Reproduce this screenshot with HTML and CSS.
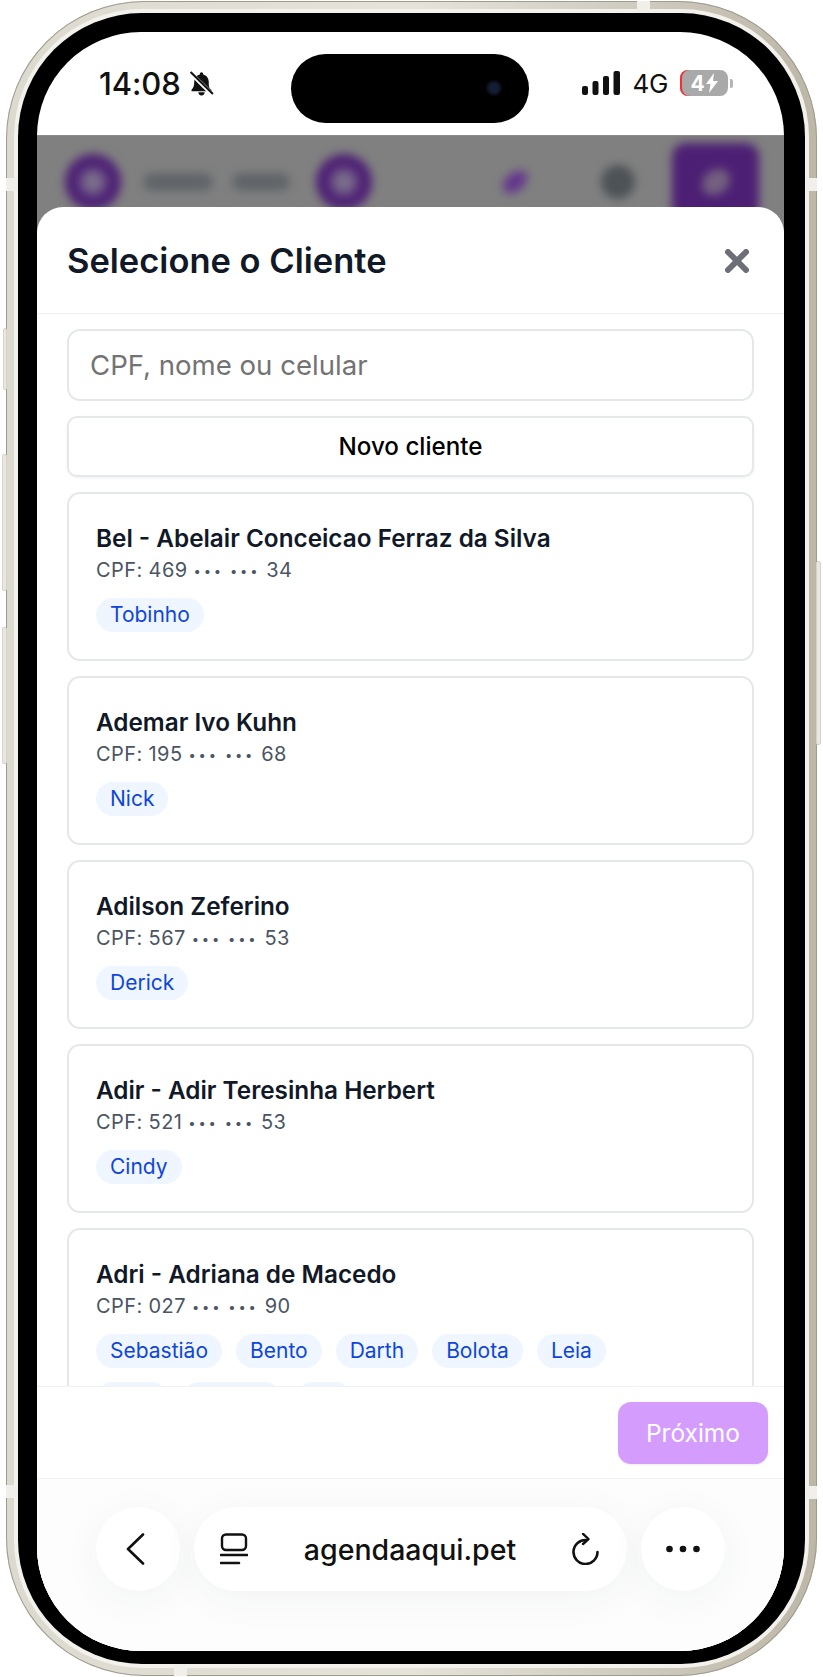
FILE: index.html
```html
<!DOCTYPE html>
<html lang="pt-BR">
<head>
<meta charset="utf-8">
<title>Selecione o Cliente</title>
<link rel="stylesheet" href="styles.css">
</head>
<body>
<div class="phone">
  <i class="side side-l1"></i><i class="side side-l2"></i><i class="side side-l3"></i><i class="side side-r1"></i>
  <i class="band band-lt"></i><i class="band band-lb"></i><i class="band band-rt"></i><i class="band band-rb"></i><i class="band band-t"></i><i class="band band-b"></i>
  <div class="bezel">
    <div class="screen">
      <div class="island"><i class="camera"></i></div>
      <header class="status">
        <span class="time">14:08</span>
        <svg class="bell" viewBox="0 0 24 26" width="25" height="27"><path d="M12 2.200c-.9 0-1.600.7-1.600 1.600v.5C7 5.100 5 8 5 11.500c0 4-1 5.800-2.500 7.400-.5.600-.1 1.500.7 1.500h17.600c.8 0 1.200-.9.700-1.500C19 17.300 19 15.500 19 11.500c0-3.500-2-6.400-5.400-7.200v-.5c0-.9-.7-1.600-1.600-1.600z" fill="#111"/><path d="M9 21.500a3 3 0 0 0 6 0z" fill="#111"/><path d="M1.500 3 23 24" stroke="#fff" stroke-width="4"/><path d="M1.500 2 23 23" stroke="#111" stroke-width="2"/></svg>
        <div class="status-right">
          <svg class="signal" viewBox="0 0 38 24" width="38" height="24"><rect x="0" y="15" width="6" height="9" rx="2"/><rect x="10.500" y="10" width="6" height="14" rx="2"/><rect x="21" y="5" width="6" height="19" rx="2"/><rect x="31.500" y="0" width="6.500" height="24" rx="2"/></svg>
          <span class="net">4G</span>
          <div class="battery"><span class="batt-num">4</span><svg viewBox="0 0 12 20" width="12" height="20"><path d="M8 0 0 11h4.500L3 20l9-12H7z" fill="#fff"/></svg></div>
          <i class="batt-nub"></i>
        </div>
      </header>
      <div class="backdrop">
        <i class="blur ring"></i><i class="blur bar bar-a"></i><i class="blur bar bar-b"></i><i class="blur ring ring-b"></i>
        <i class="blur leaf"></i><i class="blur dot"></i><i class="blur square"><i class="square-in"></i></i>
      </div>
      <section class="sheet">
        <div class="sheet-head">
          <h1 class="title">Selecione o Cliente</h1>
          <svg class="close" viewBox="0 0 24 24" width="24" height="24"><path d="M3 3l18 18M21 3 3 21" stroke="#6e6e78" stroke-width="6" stroke-linecap="round"/></svg>
        </div>
        <div class="sheet-body">
          <div class="search">CPF, nome ou celular</div>
          <div class="new-client">Novo cliente</div>
          <article class="card">
            <div class="name">Bel - Abelair Conceicao Ferraz da Silva</div>
            <div class="cpf">CPF: 469 <span class="mask">•••</span> <span class="mask">•••</span> 34</div>
            <div class="chips"><span class="chip">Tobinho</span></div>
          </article>
          <article class="card">
            <div class="name">Ademar Ivo Kuhn</div>
            <div class="cpf">CPF: 195 <span class="mask">•••</span> <span class="mask">•••</span> 68</div>
            <div class="chips"><span class="chip">Nick</span></div>
          </article>
          <article class="card">
            <div class="name">Adilson Zeferino</div>
            <div class="cpf">CPF: 567 <span class="mask">•••</span> <span class="mask">•••</span> 53</div>
            <div class="chips"><span class="chip">Derick</span></div>
          </article>
          <article class="card">
            <div class="name">Adir - Adir Teresinha Herbert</div>
            <div class="cpf">CPF: 521 <span class="mask">•••</span> <span class="mask">•••</span> 53</div>
            <div class="chips"><span class="chip">Cindy</span></div>
          </article>
          <article class="card">
            <div class="name">Adri - Adriana de Macedo</div>
            <div class="cpf">CPF: 027 <span class="mask">•••</span> <span class="mask">•••</span> 90</div>
            <div class="chips"><span class="chip">Sebastião</span><span class="chip">Bento</span><span class="chip">Darth</span><span class="chip">Bolota</span><span class="chip">Leia</span></div>
            <div class="chips chips-next"><span class="chip chip-a"></span><span class="chip chip-b"></span><span class="chip chip-c"></span></div>
          </article>
        </div>
        <div class="sheet-foot"><div class="next">Próximo</div></div>
        <nav class="browser">
          <div class="round">
            <svg class="back" viewBox="0 0 20 32" width="20" height="32"><path d="M18 1.500 3 16l15 14.500" fill="none" stroke="#111" stroke-width="2.600" stroke-linecap="round" stroke-linejoin="round"/></svg>
          </div>
          <div class="url">
            <svg viewBox="0 0 28 32" width="28" height="32"><rect x="2" y="1.500" width="24" height="15.500" rx="4" fill="none" stroke="#111" stroke-width="2.400"/><path d="M1 22h26M1 30h18" stroke="#111" stroke-width="2.600" stroke-linecap="round"/></svg>
            <span class="url-text">agendaaqui.pet</span>
            <svg viewBox="0 0 28 32" width="28" height="32"><path d="M11 .8 16.500 6 11 11" fill="none" stroke="#111" stroke-width="2.400" stroke-linecap="round" stroke-linejoin="round"/><path d="M15 6A12 12 0 1 0 26 18" fill="none" stroke="#111" stroke-width="2.600" stroke-linecap="round" transform="translate(-.5 1)"/></svg>
          </div>
          <div class="round">
            <svg viewBox="0 0 34 8" width="34" height="8"><circle cx="3.500" cy="4" r="3.300"/><circle cx="17" cy="4" r="3.300"/><circle cx="30.500" cy="4" r="3.300"/></svg>
          </div>
        </nav>
      </section>
    </div>
  </div>
</div>
</body>
</html>
```
FILE: styles.css
```css
* { box-sizing: border-box; }
html, body { margin: 0; padding: 0; background: #fff; }
body { width: 823px; height: 1677px; overflow: hidden; font-family: Inter, "Liberation Sans", sans-serif; }

.phone {
  position: relative;
  width: 811px;
  height: 1675px;
  margin: 1px 0 0 6px;
  padding: 11.500px 12px 12px;
  border-radius: 138px;
  background: linear-gradient(90deg, #dcd9cf 0%, #e6e3db 50%, #bdb7a8 100%);
  box-shadow: inset 0 0 0 1px #a09b8f;
}
.side { position: absolute; display: block; background: #e9e7e0; border: 1px solid #d6d3c9; border-radius: 2px; }
.side-l1 { left: -3px; top: 327px; width: 4px; height: 62px; }
.side-l2 { left: -4px; top: 453px; width: 5px; height: 137px; }
.side-l3 { left: -4px; top: 626px; width: 5px; height: 137px; }
.side-r1 { right: -4px; top: 560px; width: 5px; height: 184px; }
.band { position: absolute; display: block; background: #f1efe9; }
.band-lt { left: 0; top: 177px; width: 12px; height: 13px; }
.band-lb { left: 0; top: 1484px; width: 12px; height: 13px; }
.band-rt { right: 0; top: 177px; width: 12px; height: 13px; }
.band-rb { right: 0; top: 1485px; width: 12px; height: 13px; }
.band-t { left: 631px; top: 0; width: 13px; height: 12px; }
.band-b { left: 168px; bottom: 0; width: 13px; height: 12px; }

.bezel {
  height: 100%;
  padding: 19.500px 21px 13px 19px;
  background: #000;
  border-radius: 124px;
  box-shadow: 0 0 0 4px #f3f1eb;
}
.screen {
  position: relative;
  display: flex;
  flex-direction: column;
  height: 100%;
  overflow: hidden;
  background: #fff;
  border-radius: 104px;
}
.island {
  position: absolute;
  z-index: 3;
  left: 254px;
  top: 22px;
  width: 238px;
  height: 69px;
  background: #000;
  border-radius: 35px;
}
.camera {
  position: absolute;
  right: 27px;
  top: 26px;
  width: 16px;
  height: 16px;
  border-radius: 50%;
  background: radial-gradient(circle, #141d36 0 35%, #05060c 75%);
}

.status {
  flex: none;
  display: flex;
  align-items: center;
  height: 103px;
  padding: 0 51px 1px 62px;
  color: #111;
}
.time { font-size: 31px; font-weight: 500; letter-spacing: -.1px; }
.bell { margin-left: 8px; }
.status-right { display: flex; align-items: center; margin-left: auto; }
.signal { fill: #111; }
.net { margin-left: 12px; font-size: 26px; font-weight: 400; letter-spacing: -.3px; }
.battery {
  display: flex;
  align-items: center;
  justify-content: center;
  gap: 1px;
  width: 48px;
  height: 26px;
  margin-left: 12px;
  background: #a9a9a9;
  border-radius: 8px;
  box-shadow: inset 2px 0 0 #f0303a;
  color: #fff;
  font-size: 21px;
  font-weight: 700;
}
.batt-nub { display: block; width: 3px; height: 9px; margin-left: 2px; background: #b5b5b5; border-radius: 0 2px 2px 0; }

.backdrop {
  flex: none;
  display: flex;
  align-items: center;
  height: 96px;
  margin-bottom: -24px;
  padding: 0 0 4px 28px;
  background: #808080;
  border-top: 1px solid #8b8b8b;
  overflow: hidden;
}
.blur { display: block; flex: none; filter: blur(5px); }
.ring { width: 56px; height: 56px; border-radius: 50%; background: radial-gradient(circle, #7c6f8c 0 18%, #4c1f74 45%, #4c1f74 100%); }
.ring-b { margin-left: 26px; }
.bar { height: 18px; background: #606468; border-radius: 9px; }
.bar-a { width: 70px; margin-left: 22px; }
.bar-b { width: 58px; margin-left: 19px; }
.leaf { width: 28px; height: 18px; margin-left: 129px; background: #63358c; border-radius: 50%; transform: rotate(-40deg); }
.dot { width: 34px; height: 34px; margin-left: 72px; background: #4d5256; border-radius: 50%; }
.square { display: flex; align-items: center; justify-content: center; width: 87px; height: 78px; margin-left: 37px; background: #4c1f74; border-radius: 14px; }
.square-in { display: block; width: 30px; height: 24px; background: #74607f; border-radius: 50%; transform: rotate(-40deg); }

.sheet {
  position: relative;
  flex: 1;
  min-height: 0;
  display: flex;
  flex-direction: column;
  background: #fff;
  border-radius: 26px 26px 0 0;
}
.sheet-head {
  flex: none;
  display: flex;
  align-items: center;
  justify-content: space-between;
  height: 107px;
  padding: 0 35px 0 30px;
  border-bottom: 1px solid #f0f1f3;
}
.close { margin-top: 2px; }
.title { margin: 0; font-size: 34.500px; font-weight: 600; color: #111827; }
.sheet-body {
  flex: 1;
  min-height: 0;
  overflow: hidden;
  display: flex;
  flex-direction: column;
  gap: 15px;
  padding: 15px 30px 0;
}
.search {
  flex: none;
  display: flex;
  align-items: center;
  height: 72px;
  padding: 0 21px;
  border: 2px solid #e5e7eb;
  border-radius: 13px;
  color: #737373;
  font-size: 27.600px;
}
.new-client {
  flex: none;
  display: flex;
  align-items: center;
  justify-content: center;
  height: 61px;
  border: 2px solid #e5e7eb;
  border-radius: 10px;
  box-shadow: 0 1px 3px rgba(0,0,0,.06);
  color: #000;
  font-size: 24.200px;
  font-weight: 500;
}
.card {
  flex: none;
  min-height: 169px;
  padding: 28px 27px 27px;
  border: 2px solid #e5e7eb;
  border-radius: 13px;
}
.name { font-size: 24.300px; line-height: 33px; font-weight: 600; color: #111827; }
.cpf { font-size: 20px; line-height: 30px; color: #4b5563; letter-spacing: .4px; }
.mask { font-size: 13px; letter-spacing: 2.800px; vertical-align: 1px; }
.chips { display: flex; flex-wrap: wrap; gap: 14px; margin-top: 12px; }
.chips-next { margin-top: 14px; }
.chip {
  display: block;
  height: 34px;
  padding: 0 14px;
  border-radius: 17px;
  background: #eff6ff;
  color: #0f46d8;
  font-size: 21px;
  line-height: 34px;
}
.chip-a { width: 72px; }
.chip-b { width: 100px; }
.chip-c { width: 56px; }

.sheet-foot {
  flex: none;
  display: flex;
  justify-content: flex-end;
  height: 93px;
  padding: 15px 16px 0 0;
  border-top: 1px solid #f0f1f3;
  border-bottom: 1px solid #f0f1f3;
}
.next {
  width: 150px;
  height: 62px;
  background: #d49dfd;
  border-radius: 13px;
  box-shadow: 0 1px 3px rgba(0,0,0,.08);
  color: #fff;
  font-size: 24.500px;
  font-weight: 400;
  line-height: 62px;
  text-align: center;
}

.browser {
  flex: none;
  height: 172px;
  display: flex;
  gap: 14px;
  padding: 28px 59px 0;
  background: #fdfdfd;
}
.round, .url {
  height: 84px;
  background: #fff;
  box-shadow: 0 8px 40px rgba(40,50,70,.05);
}
.round {
  flex: none;
  display: flex;
  align-items: center;
  justify-content: center;
  width: 84px;
  border-radius: 50%;
}
.round svg { fill: #111; }
.back { margin-right: 6px; }
.url {
  flex: 1;
  display: flex;
  align-items: center;
  justify-content: space-between;
  padding: 0 27px 0 26px;
  border-radius: 42px;
}
.url-text { font-size: 28.500px; font-weight: 500; color: #111; }
```
